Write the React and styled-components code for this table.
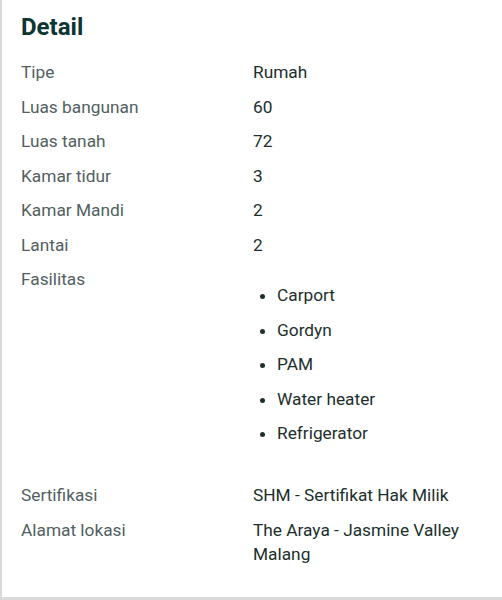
import React from 'react'
import styled, { createGlobalStyle } from 'styled-components'

const GlobalStyle = createGlobalStyle`
  body {
    margin: 0;
    background: #ffffff;
    font-family: Roboto, "Noto Sans", Arial, sans-serif;
    overflow: hidden;
  }
`

const Card = styled.section`
  box-sizing: border-box;
  width: 100%;
  min-height: 600px;
  padding: 13px 20px 29px 19px;
  background: #fff;
  border-left: 2px solid #dadada;
  border-bottom: 3px solid #dadada;
`

const Heading = styled.h2`
  margin: 0 0 18px;
  font-size: 24px;
  line-height: 29px;
  font-weight: 700;
  color: #0c3533;
`

const Table = styled.div`
  display: grid;
  grid-template-columns: 232px 1fr;
  row-gap: 10.5px;
  font-size: 17.3px;
  line-height: 24px;
`

const Label = styled.div`
  color: #52605f;
`

const Value = styled.div`
  color: #1c2f2d;
`

const List = styled.ul`
  margin: 16px 0 27.5px;
  padding-left: 24px;
  display: flex;
  flex-direction: column;
  gap: 10.5px;
  li::marker {
    color: #1c2f2d;
  }
`

const details = [
  ['Tipe', 'Rumah'],
  ['Luas bangunan', '60'],
  ['Luas tanah', '72'],
  ['Kamar tidur', '3'],
  ['Kamar Mandi', '2'],
  ['Lantai', '2'],
]

const fasilitas = ['Carport', 'Gordyn', 'PAM', 'Water heater', 'Refrigerator']

export default function App() {
  return (
    <>
      <GlobalStyle />
      <Card>
        <Heading>Detail</Heading>
        <Table>
          {details.map(([k, v]) => (
            <React.Fragment key={k}>
              <Label>{k}</Label>
              <Value>{v}</Value>
            </React.Fragment>
          ))}
          <Label>Fasilitas</Label>
          <Value>
            <List>
              {fasilitas.map((f) => (
                <li key={f}>{f}</li>
              ))}
            </List>
          </Value>
          <Label>Sertifikasi</Label>
          <Value>SHM - Sertifikat Hak Milik</Value>
          <Label>Alamat lokasi</Label>
          <Value>
            The Araya - Jasmine Valley
            <br />
            Malang
          </Value>
        </Table>
      </Card>
    </>
  )
}
